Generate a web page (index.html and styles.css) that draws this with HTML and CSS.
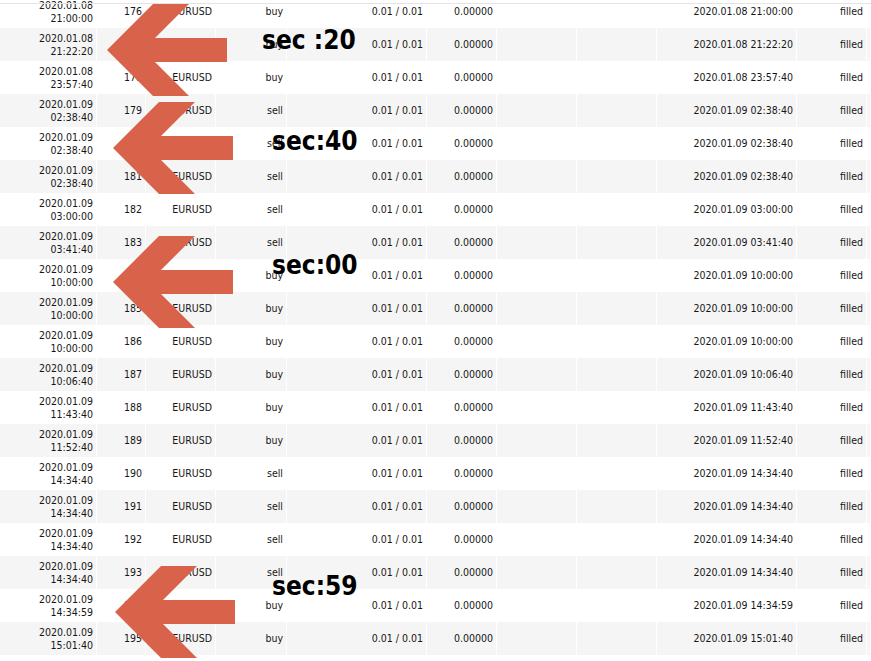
FILE: index.html
```html
<!DOCTYPE html>
<html lang="en">
<head>
<meta charset="utf-8">
<title>Orders</title>
<link rel="stylesheet" href="styles.css">
</head>
<body>
<div class="screen">
  <div class="list">
    <div class="row"><div class="cell c-time"><span>2020.01.08</span><span>21:00:00</span></div><div class="cell">176</div><div class="cell">EURUSD</div><div class="cell">buy</div><div class="cell">0.01 / 0.01</div><div class="cell">0.00000</div><div class="cell"></div><div class="cell"></div><div class="cell">2020.01.08 21:00:00</div><div class="cell">filled</div><div class="cell"></div></div>
    <div class="row"><div class="cell c-time"><span>2020.01.08</span><span>21:22:20</span></div><div class="cell">177</div><div class="cell">EURUSD</div><div class="cell">buy</div><div class="cell">0.01 / 0.01</div><div class="cell">0.00000</div><div class="cell"></div><div class="cell"></div><div class="cell">2020.01.08 21:22:20</div><div class="cell">filled</div><div class="cell"></div></div>
    <div class="row"><div class="cell c-time"><span>2020.01.08</span><span>23:57:40</span></div><div class="cell">178</div><div class="cell">EURUSD</div><div class="cell">buy</div><div class="cell">0.01 / 0.01</div><div class="cell">0.00000</div><div class="cell"></div><div class="cell"></div><div class="cell">2020.01.08 23:57:40</div><div class="cell">filled</div><div class="cell"></div></div>
    <div class="row"><div class="cell c-time"><span>2020.01.09</span><span>02:38:40</span></div><div class="cell">179</div><div class="cell">EURUSD</div><div class="cell">sell</div><div class="cell">0.01 / 0.01</div><div class="cell">0.00000</div><div class="cell"></div><div class="cell"></div><div class="cell">2020.01.09 02:38:40</div><div class="cell">filled</div><div class="cell"></div></div>
    <div class="row"><div class="cell c-time"><span>2020.01.09</span><span>02:38:40</span></div><div class="cell">180</div><div class="cell">EURUSD</div><div class="cell">sell</div><div class="cell">0.01 / 0.01</div><div class="cell">0.00000</div><div class="cell"></div><div class="cell"></div><div class="cell">2020.01.09 02:38:40</div><div class="cell">filled</div><div class="cell"></div></div>
    <div class="row"><div class="cell c-time"><span>2020.01.09</span><span>02:38:40</span></div><div class="cell">181</div><div class="cell">EURUSD</div><div class="cell">sell</div><div class="cell">0.01 / 0.01</div><div class="cell">0.00000</div><div class="cell"></div><div class="cell"></div><div class="cell">2020.01.09 02:38:40</div><div class="cell">filled</div><div class="cell"></div></div>
    <div class="row"><div class="cell c-time"><span>2020.01.09</span><span>03:00:00</span></div><div class="cell">182</div><div class="cell">EURUSD</div><div class="cell">sell</div><div class="cell">0.01 / 0.01</div><div class="cell">0.00000</div><div class="cell"></div><div class="cell"></div><div class="cell">2020.01.09 03:00:00</div><div class="cell">filled</div><div class="cell"></div></div>
    <div class="row"><div class="cell c-time"><span>2020.01.09</span><span>03:41:40</span></div><div class="cell">183</div><div class="cell">EURUSD</div><div class="cell">sell</div><div class="cell">0.01 / 0.01</div><div class="cell">0.00000</div><div class="cell"></div><div class="cell"></div><div class="cell">2020.01.09 03:41:40</div><div class="cell">filled</div><div class="cell"></div></div>
    <div class="row"><div class="cell c-time"><span>2020.01.09</span><span>10:00:00</span></div><div class="cell">184</div><div class="cell">EURUSD</div><div class="cell">buy</div><div class="cell">0.01 / 0.01</div><div class="cell">0.00000</div><div class="cell"></div><div class="cell"></div><div class="cell">2020.01.09 10:00:00</div><div class="cell">filled</div><div class="cell"></div></div>
    <div class="row"><div class="cell c-time"><span>2020.01.09</span><span>10:00:00</span></div><div class="cell">185</div><div class="cell">EURUSD</div><div class="cell">buy</div><div class="cell">0.01 / 0.01</div><div class="cell">0.00000</div><div class="cell"></div><div class="cell"></div><div class="cell">2020.01.09 10:00:00</div><div class="cell">filled</div><div class="cell"></div></div>
    <div class="row"><div class="cell c-time"><span>2020.01.09</span><span>10:00:00</span></div><div class="cell">186</div><div class="cell">EURUSD</div><div class="cell">buy</div><div class="cell">0.01 / 0.01</div><div class="cell">0.00000</div><div class="cell"></div><div class="cell"></div><div class="cell">2020.01.09 10:00:00</div><div class="cell">filled</div><div class="cell"></div></div>
    <div class="row"><div class="cell c-time"><span>2020.01.09</span><span>10:06:40</span></div><div class="cell">187</div><div class="cell">EURUSD</div><div class="cell">buy</div><div class="cell">0.01 / 0.01</div><div class="cell">0.00000</div><div class="cell"></div><div class="cell"></div><div class="cell">2020.01.09 10:06:40</div><div class="cell">filled</div><div class="cell"></div></div>
    <div class="row"><div class="cell c-time"><span>2020.01.09</span><span>11:43:40</span></div><div class="cell">188</div><div class="cell">EURUSD</div><div class="cell">buy</div><div class="cell">0.01 / 0.01</div><div class="cell">0.00000</div><div class="cell"></div><div class="cell"></div><div class="cell">2020.01.09 11:43:40</div><div class="cell">filled</div><div class="cell"></div></div>
    <div class="row"><div class="cell c-time"><span>2020.01.09</span><span>11:52:40</span></div><div class="cell">189</div><div class="cell">EURUSD</div><div class="cell">buy</div><div class="cell">0.01 / 0.01</div><div class="cell">0.00000</div><div class="cell"></div><div class="cell"></div><div class="cell">2020.01.09 11:52:40</div><div class="cell">filled</div><div class="cell"></div></div>
    <div class="row"><div class="cell c-time"><span>2020.01.09</span><span>14:34:40</span></div><div class="cell">190</div><div class="cell">EURUSD</div><div class="cell">sell</div><div class="cell">0.01 / 0.01</div><div class="cell">0.00000</div><div class="cell"></div><div class="cell"></div><div class="cell">2020.01.09 14:34:40</div><div class="cell">filled</div><div class="cell"></div></div>
    <div class="row"><div class="cell c-time"><span>2020.01.09</span><span>14:34:40</span></div><div class="cell">191</div><div class="cell">EURUSD</div><div class="cell">sell</div><div class="cell">0.01 / 0.01</div><div class="cell">0.00000</div><div class="cell"></div><div class="cell"></div><div class="cell">2020.01.09 14:34:40</div><div class="cell">filled</div><div class="cell"></div></div>
    <div class="row"><div class="cell c-time"><span>2020.01.09</span><span>14:34:40</span></div><div class="cell">192</div><div class="cell">EURUSD</div><div class="cell">sell</div><div class="cell">0.01 / 0.01</div><div class="cell">0.00000</div><div class="cell"></div><div class="cell"></div><div class="cell">2020.01.09 14:34:40</div><div class="cell">filled</div><div class="cell"></div></div>
    <div class="row"><div class="cell c-time"><span>2020.01.09</span><span>14:34:40</span></div><div class="cell">193</div><div class="cell">EURUSD</div><div class="cell">sell</div><div class="cell">0.01 / 0.01</div><div class="cell">0.00000</div><div class="cell"></div><div class="cell"></div><div class="cell">2020.01.09 14:34:40</div><div class="cell">filled</div><div class="cell"></div></div>
    <div class="row"><div class="cell c-time"><span>2020.01.09</span><span>14:34:59</span></div><div class="cell">194</div><div class="cell">EURUSD</div><div class="cell">buy</div><div class="cell">0.01 / 0.01</div><div class="cell">0.00000</div><div class="cell"></div><div class="cell"></div><div class="cell">2020.01.09 14:34:59</div><div class="cell">filled</div><div class="cell"></div></div>
    <div class="row"><div class="cell c-time"><span>2020.01.09</span><span>15:01:40</span></div><div class="cell">195</div><div class="cell">EURUSD</div><div class="cell">buy</div><div class="cell">0.01 / 0.01</div><div class="cell">0.00000</div><div class="cell"></div><div class="cell"></div><div class="cell">2020.01.09 15:01:40</div><div class="cell">filled</div><div class="cell"></div></div>
  </div>

  <div class="header-edge"></div>

  <svg class="arrow a1" width="120" height="92" viewBox="0 0 120 92"><polygon points="0,46 46,0 82,0 48,34 120,34 120,58 48,58 82,92 46,92"/></svg>
  <svg class="arrow a2" width="120" height="92" viewBox="0 0 120 92"><polygon points="0,46 46,0 82,0 48,34 120,34 120,58 48,58 82,92 46,92"/></svg>
  <svg class="arrow a3" width="120" height="92" viewBox="0 0 120 92"><polygon points="0,46 46,0 82,0 48,34 120,34 120,58 48,58 82,92 46,92"/></svg>
  <svg class="arrow a4" width="120" height="92" viewBox="0 0 120 92"><polygon points="0,46 46,0 82,0 48,34 120,34 120,58 48,58 82,92 46,92"/></svg>

  <div class="label l1">sec :20</div>
  <div class="label l2">sec:40</div>
  <div class="label l3">sec:00</div>
  <div class="label l4">sec:59</div>
</div>
</body>
</html>
```

FILE: styles.css
```css
html, body {
  margin: 0;
  padding: 0;
  background: #ffffff;
}

body {
  width: 871px;
  height: 661px;
  overflow: hidden;
}

.screen {
  position: relative;
  width: 871px;
  height: 661px;
  overflow: hidden;
  font-family: "DejaVu Sans Condensed", "DejaVu Sans", sans-serif;
  font-stretch: condensed;
  font-size: 10.5px;
  color: #161616;
}

.list {
  display: flex;
  flex-direction: column;
  margin-top: -5px;
}

.row {
  display: grid;
  grid-template-columns: 97px 49px 70px 71px 140px 70px 80px 80px 140px 70px 1fr;
  height: 33px;
  background: #ffffff;
}

.row:nth-child(even) {
  background: #f5f5f5;
}

.cell {
  box-sizing: border-box;
  display: flex;
  align-items: center;
  justify-content: flex-end;
  padding-right: 3px;
  border-right: 1px solid #ffffff;
  white-space: nowrap;
  line-height: 13px;
}

.c-time {
  flex-direction: column;
  align-items: flex-end;
  justify-content: center;
}

.header-edge {
  position: absolute;
  left: 0;
  top: 3px;
  width: 100%;
  height: 1px;
  background: #e4e4e4;
}

.arrow {
  position: absolute;
  fill: #d9634a;
}

.a1 { left: 107px; top: 4px; }
.a2 { left: 113px; top: 102px; }
.a3 { left: 113px; top: 236px; }
.a4 { left: 115px; top: 566px; }

.label {
  position: absolute;
  font-family: "DejaVu Sans Condensed", "DejaVu Sans", sans-serif;
  font-stretch: condensed;
  font-weight: bold;
  font-size: 26px;
  line-height: 26px;
  color: #000000;
  white-space: pre;
}

.l1 { left: 262px; top: 27px; }
.l2 { left: 272px; top: 128px; }
.l3 { left: 272px; top: 252px; }
.l4 { left: 272px; top: 573px; }
```
